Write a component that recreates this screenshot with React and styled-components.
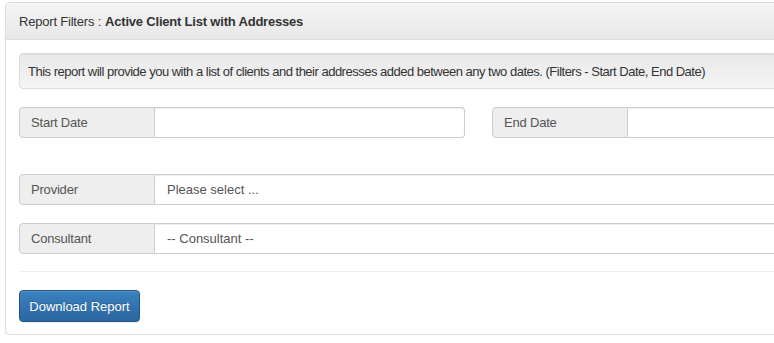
import styled, { createGlobalStyle } from "styled-components";

const GlobalStyle = createGlobalStyle`
    html, body {
        margin: 0;
        padding: 0;
        background: #fff;
        overflow: hidden;
    }
    body {
        font-family: "Liberation Sans", Arial, sans-serif;
        font-size: 13px;
        color: #333;
    }
    * { box-sizing: border-box; }
`

const Page = styled.div`
    padding: 2px 0 0 5px;
    width: 1000px;
`

const Panel = styled.div`
    width: 947px;
    border: 1px solid #ddd;
    border-radius: 4px;
    background: #fff;
    box-shadow: 0 1px 2px rgba(0,0,0,.05);
`

const PanelHeading = styled.div`
    height: 37px;
    display: flex;
    align-items: center;
    padding: 0 13px;
    border-bottom: 1px solid #ddd;
    border-radius: 3px 3px 0 0;
    background-image: linear-gradient(to bottom, #f5f5f5 0%, #e8e8e8 100%);
    color: #333;
    letter-spacing: -0.2px;

    b{
        margin-left: 4px;
    }
`

const PanelBody = styled.div`
    padding: 13px 13px 12px;
    display: flex;
    flex-direction: column;
`

const Well = styled.div`
    height: 36px;
    display: flex;
    align-items: center;
    padding: 0 8px;
    border: 1px solid #dcdcdc;
    border-radius: 4px;
    background-image: linear-gradient(to bottom, #e8e8e8 0%, #f5f5f5 100%);
    box-shadow: inset 0 1px 1px rgba(0,0,0,.05), 0 1px 0 rgba(255,255,255,.1);
    margin-bottom: 18px;
    letter-spacing: -0.5px;
`

const DateRow = styled.div`
    display: grid;
    grid-template-columns: 1fr 1fr;
    column-gap: 27px;
    margin-bottom: 36px;
`

const InputGroup = styled.div`
    display: flex;
    height: 31px;
    margin-bottom: ${p => p.$gap || 0}px;
`

const Addon = styled.span`
    width: 136px;
    flex: none;
    display: flex;
    align-items: center;
    padding: 0 11px;
    background: #eee;
    border: 1px solid #ccc;
    border-radius: 4px 0 0 4px;
    color: #555;
    letter-spacing: -0.2px;
`

const Field = styled.div`
    flex: 1;
    display: flex;
    align-items: center;
    padding: 0 12px;
    border: 1px solid #ccc;
    border-left: 0;
    border-radius: 0 4px 4px 0;
    background: #fff;
    color: #555;
    box-shadow: inset 0 1px 1px rgba(0,0,0,.075);
`

const Divider = styled.hr`
    border: 0;
    border-top: 1px solid #eee;
    margin: 0 0 18px;
`

const Button = styled.button`
    align-self: flex-start;
    width: 121px;
    height: 32px;
    padding: 0;
    font-family: inherit;
    font-size: 13px;
    color: #fff;
    border: 1px solid #245580;
    border-radius: 4px;
    background-image: linear-gradient(to bottom, #3a82c0 0%, #2b66a0 100%);
    text-shadow: 0 -1px 0 rgba(0,0,0,.2);
    box-shadow: inset 0 1px 0 rgba(255,255,255,.15), 0 1px 1px rgba(0,0,0,.075);
    cursor: pointer;
`

export default function App() {
    return (
        <Page>
            <GlobalStyle />
            <Panel>
                <PanelHeading>
                    Report Filters : <b>Active Client List with Addresses</b>
                </PanelHeading>
                <PanelBody>
                    <Well>
                        This report will provide you with a list of clients and their addresses added between any two dates. (Filters - Start Date, End Date)
                    </Well>
                    <DateRow>
                        <InputGroup>
                            <Addon>Start Date</Addon>
                            <Field />
                        </InputGroup>
                        <InputGroup>
                            <Addon>End Date</Addon>
                            <Field />
                        </InputGroup>
                    </DateRow>
                    <InputGroup $gap={18}>
                        <Addon>Provider</Addon>
                        <Field>Please select ...</Field>
                    </InputGroup>
                    <InputGroup $gap={17}>
                        <Addon>Consultant</Addon>
                        <Field>-- Consultant --</Field>
                    </InputGroup>
                    <Divider />
                    <Button>Download Report</Button>
                </PanelBody>
            </Panel>
        </Page>
    )
}
